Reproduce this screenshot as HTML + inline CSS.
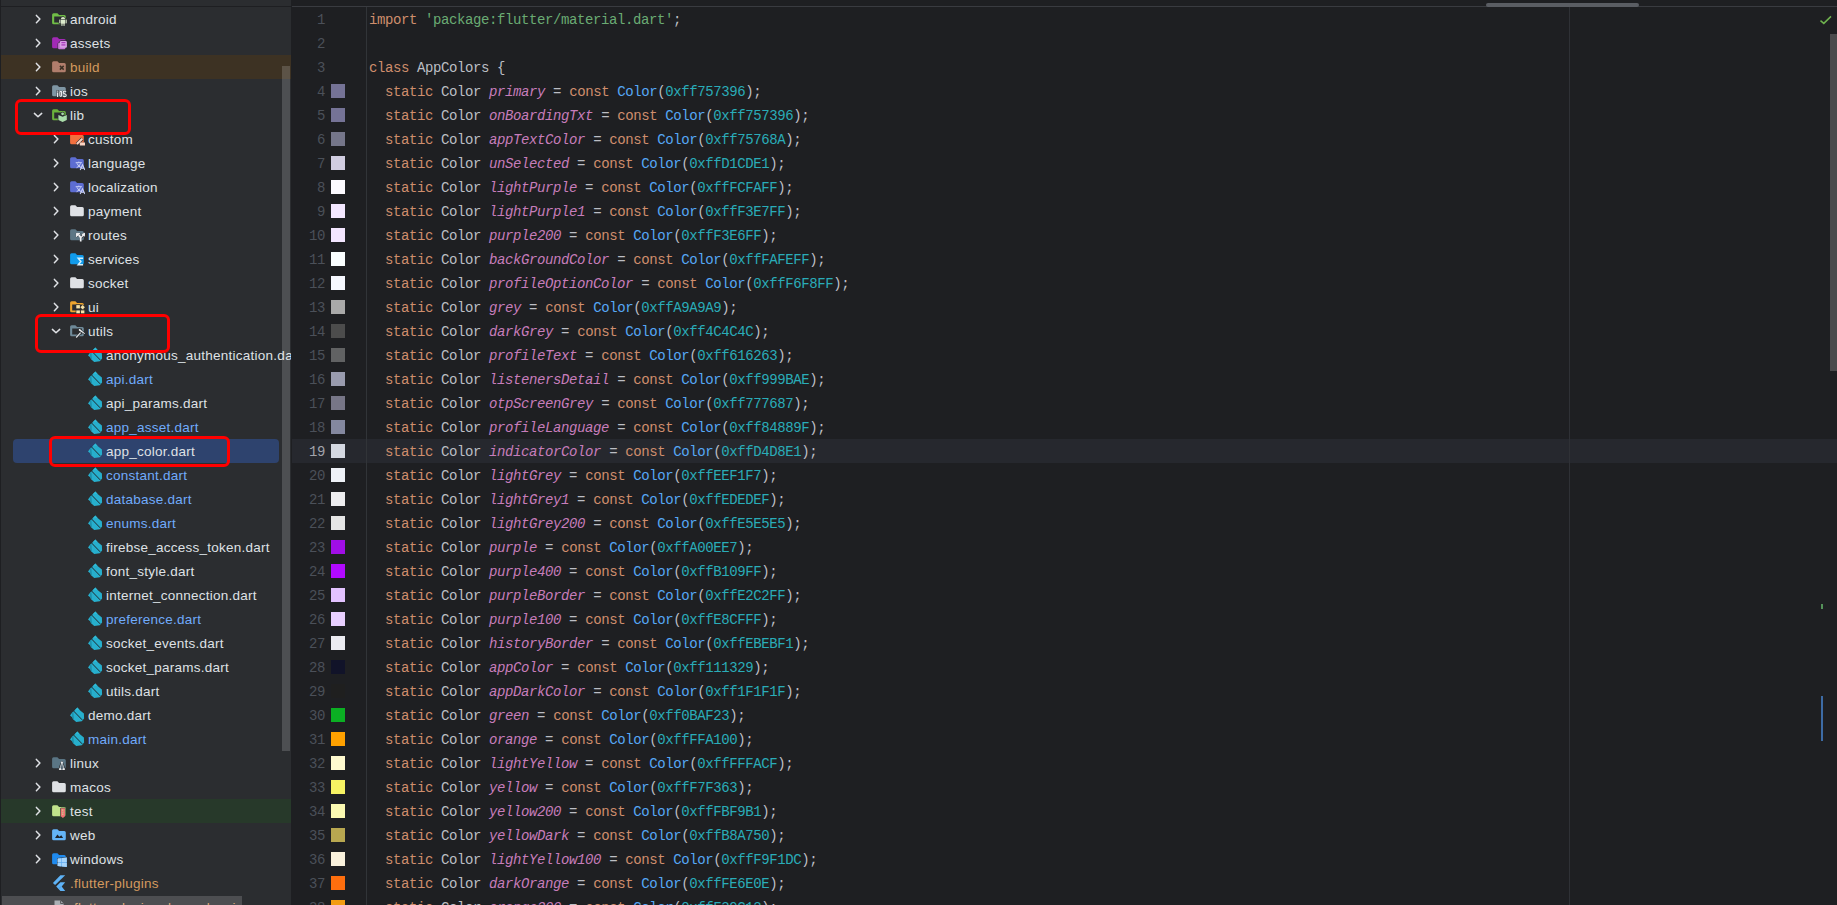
<!DOCTYPE html>
<html><head><meta charset="utf-8"><style>
html,body{margin:0;padding:0;width:1837px;height:905px;overflow:hidden;background:#1E1F22;}
body{position:relative;font-family:"Liberation Sans",sans-serif;}
#side{position:absolute;left:0;top:0;width:291px;height:905px;background:#2B2D30;overflow:hidden;}
#side .topline{position:absolute;left:0;top:6px;width:291px;height:1px;background:#1E1F22;}
.rowbg{position:absolute;left:0;width:291px;height:24px;}
.sel{position:absolute;left:13px;width:266px;height:24px;background:#2E436E;border-radius:4px;}
.ch{position:absolute;width:16px;height:16px;}
.ch svg{display:block}
.ic{position:absolute;}
.tl{position:absolute;height:24px;line-height:24px;font-size:13.5px;letter-spacing:0.25px;white-space:nowrap;}
.vsb{position:absolute;left:282px;top:66px;width:8px;height:685px;background:rgba(255,255,255,0.165);}
.hsb{position:absolute;left:2px;top:896px;width:240px;height:9px;background:rgba(255,255,255,0.16);}
.rbox{position:absolute;border:3px solid #FF0000;border-radius:6px;box-sizing:border-box;}
#ed{position:absolute;left:291px;top:0;width:1546px;height:905px;background:#1E1F22;overflow:hidden;}
.edline{position:absolute;left:1px;top:6px;width:1546px;height:1px;background:#393B40;}
.tsb{position:absolute;left:1195px;top:3px;width:153px;height:4px;background:#5A5D63;border-radius:2px;}
.caret{position:absolute;left:1px;width:1546px;height:24px;background:#26282E;}
.gsep{position:absolute;left:75px;top:7px;width:1px;height:898px;background:#313438;}
.rmargin{position:absolute;left:1278px;top:7px;width:1px;height:898px;background:#2F3136;}
.ln{position:absolute;left:0;width:34px;text-align:right;height:24px;line-height:24px;font-family:"Liberation Mono",monospace;font-size:14px;letter-spacing:-0.4px;color:#4B5059;}
.ln.cur{color:#A1A3AB;}
.sw{position:absolute;left:40px;width:14px;height:14px;}
.cl{position:absolute;left:78px;height:24px;line-height:24px;font-family:"Liberation Mono",monospace;font-size:14px;letter-spacing:-0.4px;white-space:pre;color:#BCBEC4;}
.esb{position:absolute;left:1539px;top:34px;width:7px;height:337px;background:#4A4A4C;}
.mk{position:absolute;left:1530px;width:2px;}
</style></head><body>
<div id="side">
<div class="topline"></div>
<div class="ch" style="left:30px;top:11px"><svg class="chev" width="16" height="16" viewBox="0 0 16 16"><path d="M6.4 4.4L9.9 8L6.4 11.7" fill="none" stroke="#DFE1E5" stroke-width="1.5" stroke-linecap="round" stroke-linejoin="round"/></svg></div>
<svg class="ic" style="left:51px;top:11px" width="16" height="16" viewBox="0 0 16 16"><path d="M1.1 3.8Q1.1 2.3 2.6 2.3H6.4L8.1 4.1H13.3Q14.8 4.1 14.8 5.6V11.8Q14.8 13.3 13.3 13.3H2.6Q1.1 13.3 1.1 11.8Z M3.2 5.6H12.9V11.4H3.2Z" fill="#71BE47" fill-rule="evenodd"/><g stroke="#2B2D30" stroke-width="1.3" stroke-linejoin="round" fill="#2B2D30"><path d="M9.9 8.1A2.1 2 0 0 1 14.1 8.1Z"/><rect x="9.9" y="8.6" width="4.2" height="4.2"/><rect x="8.3" y="8.6" width="1.1" height="3.7"/><rect x="14.6" y="8.6" width="1.1" height="3.7"/><rect x="10.4" y="12.6" width="1.1" height="2.3"/><rect x="12.5" y="12.6" width="1.1" height="2.3"/></g><g fill="#DCEACB"><path d="M9.9 8.1A2.1 2 0 0 1 14.1 8.1Z"/><rect x="9.9" y="8.6" width="4.2" height="4.2"/><rect x="8.3" y="8.6" width="1.1" height="3.7"/><rect x="14.6" y="8.6" width="1.1" height="3.7"/><rect x="10.4" y="12.6" width="1.1" height="2.3"/><rect x="12.5" y="12.6" width="1.1" height="2.3"/></g></svg>
<div class="tl" style="left:70px;top:8px;color:#DFE1E5">android</div>
<div class="ch" style="left:30px;top:35px"><svg class="chev" width="16" height="16" viewBox="0 0 16 16"><path d="M6.4 4.4L9.9 8L6.4 11.7" fill="none" stroke="#DFE1E5" stroke-width="1.5" stroke-linecap="round" stroke-linejoin="round"/></svg></div>
<svg class="ic" style="left:51px;top:35px" width="16" height="16" viewBox="0 0 16 16"><path d="M1.1 3.8Q1.1 2.3 2.6 2.3H6.4L8.1 4.1H13.3Q14.8 4.1 14.8 5.6V11.8Q14.8 13.3 13.3 13.3H2.6Q1.1 13.3 1.1 11.8Z" fill="#A12AB5"/><g stroke="#2B2D30" stroke-width="1.0" stroke-linejoin="round" fill="#2B2D30"><rect x="7.1" y="7.7" width="7.3" height="6.6" rx="1.2"/><rect x="8.8" y="5.9" width="7.1" height="6.9" rx="1.2"/></g><rect x="7.1" y="7.7" width="7.3" height="6.6" rx="1.2" fill="#C679D5"/><rect x="8.8" y="5.9" width="7.1" height="6.9" rx="1.2" fill="#D99FE4"/><rect x="10.4" y="7.1" width="4" height="1.1" fill="#A433B7"/><rect x="10.4" y="9.1" width="4" height="1.6" fill="#B24FC3"/></svg>
<div class="tl" style="left:70px;top:32px;color:#DFE1E5">assets</div>
<div class="rowbg" style="top:55px;background:#3D3223"></div>
<div class="ch" style="left:30px;top:59px"><svg class="chev" width="16" height="16" viewBox="0 0 16 16"><path d="M6.4 4.4L9.9 8L6.4 11.7" fill="none" stroke="#DFE1E5" stroke-width="1.5" stroke-linecap="round" stroke-linejoin="round"/></svg></div>
<svg class="ic" style="left:51px;top:59px" width="16" height="16" viewBox="0 0 16 16"><path d="M1.1 3.8Q1.1 2.3 2.6 2.3H6.4L8.1 4.1H13.3Q14.8 4.1 14.8 5.6V11.8Q14.8 13.3 13.3 13.3H2.6Q1.1 13.3 1.1 11.8Z" fill="#B17E6C"/><path d="M8.9 6.9L12.7 10.6M12.7 6.9L8.9 10.6" stroke="#3A3024" stroke-width="1.5"/></svg>
<div class="tl" style="left:70px;top:56px;color:#D49A5F">build</div>
<div class="ch" style="left:30px;top:83px"><svg class="chev" width="16" height="16" viewBox="0 0 16 16"><path d="M6.4 4.4L9.9 8L6.4 11.7" fill="none" stroke="#DFE1E5" stroke-width="1.5" stroke-linecap="round" stroke-linejoin="round"/></svg></div>
<svg class="ic" style="left:51px;top:83px" width="16" height="16" viewBox="0 0 16 16"><path d="M1.1 3.8Q1.1 2.3 2.6 2.3H6.4L8.1 4.1H13.3Q14.8 4.1 14.8 5.6V11.8Q14.8 13.3 13.3 13.3H2.6Q1.1 13.3 1.1 11.8Z" fill="#7F96A4"/><g fill="#2B2D30" stroke="#2B2D30" stroke-width="0.7"><rect x="6" y="7.6" width="1.2" height="1.1"/><rect x="6" y="9.4" width="1.2" height="4.6"/></g><g fill="none" stroke="#2B2D30" stroke-width="1.9"><rect x="8.9" y="8.4" width="1.7" height="5" rx=".85"/><path d="M15.1 8.7Q14.6 8.1 13.6 8.1Q12.2 8.1 12.2 9.3Q12.2 10.5 13.7 10.9Q15.2 11.3 15.2 12.4Q15.2 13.6 13.6 13.6Q12.5 13.6 11.9 12.9"/></g><g fill="#E6EAED"><rect x="6" y="7.6" width="1.2" height="1.1"/><rect x="6" y="9.4" width="1.2" height="4.6"/></g><g fill="none" stroke="#E6EAED" stroke-width="1.2"><rect x="8.9" y="8.4" width="1.7" height="5" rx=".85"/><path d="M15.1 8.7Q14.6 8.1 13.6 8.1Q12.2 8.1 12.2 9.3Q12.2 10.5 13.7 10.9Q15.2 11.3 15.2 12.4Q15.2 13.6 13.6 13.6Q12.5 13.6 11.9 12.9"/></g></svg>
<div class="tl" style="left:70px;top:80px;color:#DFE1E5">ios</div>
<div class="ch" style="left:30px;top:107px"><svg class="chev" width="16" height="16" viewBox="0 0 16 16"><path d="M4.4 6.4L8 9.8L11.7 6.4" fill="none" stroke="#DFE1E5" stroke-width="1.5" stroke-linecap="round" stroke-linejoin="round"/></svg></div>
<svg class="ic" style="left:51px;top:107px" width="16" height="16" viewBox="0 0 16 16"><path d="M1.1 3.8Q1.1 2.3 2.6 2.3H6.4L8.1 4.1H13.3Q14.8 4.1 14.8 5.6V11.8Q14.8 13.3 13.3 13.3H2.6Q1.1 13.3 1.1 11.8Z M3.2 5.6H12.9V11.4H3.2Z" fill="#6BB33C" fill-rule="evenodd"/><g stroke="#2B2D30" stroke-width="1.3" stroke-linejoin="round" fill="#2B2D30"><circle cx="11.6" cy="6.8" r="1.4"/><path d="M7.4 8.1L11.6 9.7L15.8 8.1V13.1L11.6 14.9L7.4 13.1Z"/></g><g fill="#A9DCA9"><circle cx="11.6" cy="6.8" r="1.4"/><path d="M7.4 8.1L11.6 9.7L15.8 8.1V13.1L11.6 14.9L7.4 13.1Z"/></g></svg>
<div class="tl" style="left:70px;top:104px;color:#DFE1E5">lib</div>
<div class="ch" style="left:48px;top:131px"><svg class="chev" width="16" height="16" viewBox="0 0 16 16"><path d="M6.4 4.4L9.9 8L6.4 11.7" fill="none" stroke="#DFE1E5" stroke-width="1.5" stroke-linecap="round" stroke-linejoin="round"/></svg></div>
<svg class="ic" style="left:69px;top:131px" width="16" height="16" viewBox="0 0 16 16"><path d="M1.1 3.8Q1.1 2.3 2.6 2.3H6.4L8.1 4.1H13.3Q14.8 4.1 14.8 5.6V11.8Q14.8 13.3 13.3 13.3H2.6Q1.1 13.3 1.1 11.8Z" fill="#F2703F"/><g stroke="#2B2D30" fill="#2B2D30"><path d="M7.9 13.1L13.3 7.8" stroke-width="3.3" fill="none"/><rect x="11" y="11.6" width="5.4" height="2.8" stroke-width="0"/></g><g stroke="#F9D3C3" fill="#F9D3C3"><path d="M7.9 13.1L13.3 7.8" stroke-width="2.1" fill="none"/><rect x="11.4" y="12" width="4.6" height="2"/></g></svg>
<div class="tl" style="left:88px;top:128px;color:#DFE1E5">custom</div>
<div class="ch" style="left:48px;top:155px"><svg class="chev" width="16" height="16" viewBox="0 0 16 16"><path d="M6.4 4.4L9.9 8L6.4 11.7" fill="none" stroke="#DFE1E5" stroke-width="1.5" stroke-linecap="round" stroke-linejoin="round"/></svg></div>
<svg class="ic" style="left:69px;top:155px" width="16" height="16" viewBox="0 0 16 16"><path d="M1.1 3.8Q1.1 2.3 2.6 2.3H6.4L8.1 4.1H13.3Q14.8 4.1 14.8 5.6V11.8Q14.8 13.3 13.3 13.3H2.6Q1.1 13.3 1.1 11.8Z" fill="#5D6DD2"/><g stroke="#CBD2F5" fill="none"><path d="M6.7 7.7H12.9M9.8 6.6V7.7M8 8.4Q9.4 11.6 12.2 12.6M11.6 8.4Q10.3 11.7 7.6 12.7" fill="none" stroke-width="1"/><path d="M11.2 14.9L13.5 9.8L15.8 14.9M12.1 13.3H14.9" fill="none" stroke-width="1.1"/></g></svg>
<div class="tl" style="left:88px;top:152px;color:#DFE1E5">language</div>
<div class="ch" style="left:48px;top:179px"><svg class="chev" width="16" height="16" viewBox="0 0 16 16"><path d="M6.4 4.4L9.9 8L6.4 11.7" fill="none" stroke="#DFE1E5" stroke-width="1.5" stroke-linecap="round" stroke-linejoin="round"/></svg></div>
<svg class="ic" style="left:69px;top:179px" width="16" height="16" viewBox="0 0 16 16"><path d="M1.1 3.8Q1.1 2.3 2.6 2.3H6.4L8.1 4.1H13.3Q14.8 4.1 14.8 5.6V11.8Q14.8 13.3 13.3 13.3H2.6Q1.1 13.3 1.1 11.8Z" fill="#5D6DD2"/><g stroke="#CBD2F5" fill="none"><path d="M6.7 7.7H12.9M9.8 6.6V7.7M8 8.4Q9.4 11.6 12.2 12.6M11.6 8.4Q10.3 11.7 7.6 12.7" fill="none" stroke-width="1"/><path d="M11.2 14.9L13.5 9.8L15.8 14.9M12.1 13.3H14.9" fill="none" stroke-width="1.1"/></g></svg>
<div class="tl" style="left:88px;top:176px;color:#DFE1E5">localization</div>
<div class="ch" style="left:48px;top:203px"><svg class="chev" width="16" height="16" viewBox="0 0 16 16"><path d="M6.4 4.4L9.9 8L6.4 11.7" fill="none" stroke="#DFE1E5" stroke-width="1.5" stroke-linecap="round" stroke-linejoin="round"/></svg></div>
<svg class="ic" style="left:69px;top:203px" width="16" height="16" viewBox="0 0 16 16"><path d="M1.1 3.8Q1.1 2.3 2.6 2.3H6.4L8.1 4.1H13.3Q14.8 4.1 14.8 5.6V11.8Q14.8 13.3 13.3 13.3H2.6Q1.1 13.3 1.1 11.8Z" fill="#DFE1E5"/></svg>
<div class="tl" style="left:88px;top:200px;color:#DFE1E5">payment</div>
<div class="ch" style="left:48px;top:227px"><svg class="chev" width="16" height="16" viewBox="0 0 16 16"><path d="M6.4 4.4L9.9 8L6.4 11.7" fill="none" stroke="#DFE1E5" stroke-width="1.5" stroke-linecap="round" stroke-linejoin="round"/></svg></div>
<svg class="ic" style="left:69px;top:227px" width="16" height="16" viewBox="0 0 16 16"><path d="M1.1 3.8Q1.1 2.3 2.6 2.3H6.4L8.1 4.1H13.3Q14.8 4.1 14.8 5.6V11.8Q14.8 13.3 13.3 13.3H2.6Q1.1 13.3 1.1 11.8Z" fill="#5D7785"/><g stroke="#2B2D30" stroke-width="1.2" stroke-linejoin="round" fill="#2B2D30"><path d="M11.7 14.4V11.2Q11.7 9.8 9.6 8" fill="none" stroke-width="1.7"/><path d="M7.5 6.3L10.8 6.5L7.4 9.7Z"/><path d="M12 10.6L14 8.3" fill="none" stroke-width="2.8"/><path d="M16 6.2L13.1 7.3L15.1 9.3Z"/></g><g fill="#F0F2F4" stroke="#F0F2F4" ><path d="M11.7 14.4V11.2Q11.7 9.8 9.6 8" fill="none" stroke-width="1.7"/><path d="M7.5 6.3L10.8 6.5L7.4 9.7Z"/><path d="M12 10.6L14 8.3" fill="none" stroke-width="1.4"/><path d="M16 6.2L13.1 7.3L15.1 9.3Z"/></g></svg>
<div class="tl" style="left:88px;top:224px;color:#DFE1E5">routes</div>
<div class="ch" style="left:48px;top:251px"><svg class="chev" width="16" height="16" viewBox="0 0 16 16"><path d="M6.4 4.4L9.9 8L6.4 11.7" fill="none" stroke="#DFE1E5" stroke-width="1.5" stroke-linecap="round" stroke-linejoin="round"/></svg></div>
<svg class="ic" style="left:69px;top:251px" width="16" height="16" viewBox="0 0 16 16"><path d="M1.1 3.8Q1.1 2.3 2.6 2.3H6.4L8.1 4.1H13.3Q14.8 4.1 14.8 5.6V11.8Q14.8 13.3 13.3 13.3H2.6Q1.1 13.3 1.1 11.8Z" fill="#119BEB"/><g stroke="#D4EFFC" fill="none"><path d="M14.1 7.2H9.2L11.9 10.5L9.2 13.8H14.1" fill="none" stroke-width="1.5"/></g></svg>
<div class="tl" style="left:88px;top:248px;color:#DFE1E5">services</div>
<div class="ch" style="left:48px;top:275px"><svg class="chev" width="16" height="16" viewBox="0 0 16 16"><path d="M6.4 4.4L9.9 8L6.4 11.7" fill="none" stroke="#DFE1E5" stroke-width="1.5" stroke-linecap="round" stroke-linejoin="round"/></svg></div>
<svg class="ic" style="left:69px;top:275px" width="16" height="16" viewBox="0 0 16 16"><path d="M1.1 3.8Q1.1 2.3 2.6 2.3H6.4L8.1 4.1H13.3Q14.8 4.1 14.8 5.6V11.8Q14.8 13.3 13.3 13.3H2.6Q1.1 13.3 1.1 11.8Z" fill="#DFE1E5"/></svg>
<div class="tl" style="left:88px;top:272px;color:#DFE1E5">socket</div>
<div class="ch" style="left:48px;top:299px"><svg class="chev" width="16" height="16" viewBox="0 0 16 16"><path d="M6.4 4.4L9.9 8L6.4 11.7" fill="none" stroke="#DFE1E5" stroke-width="1.5" stroke-linecap="round" stroke-linejoin="round"/></svg></div>
<svg class="ic" style="left:69px;top:299px" width="16" height="16" viewBox="0 0 16 16"><path d="M1.1 3.8Q1.1 2.3 2.6 2.3H6.4L8.1 4.1H13.3Q14.8 4.1 14.8 5.6V11.8Q14.8 13.3 13.3 13.3H2.6Q1.1 13.3 1.1 11.8Z M3.2 5.6H12.9V11.4H3.2Z" fill="#EFA52D" fill-rule="evenodd"/><g stroke="#2B2D30" stroke-width="1.2" stroke-linejoin="round" fill="#2B2D30"><rect x="7.3" y="6.1" width="3.6" height="3.3"/><path d="M13.6 6.1L15.9 8.3L13.6 10.5L11.4 8.3Z"/><rect x="7.3" y="11.4" width="3.6" height="2.9"/><rect x="12" y="11.4" width="3.4" height="2.9"/></g><g fill="#F6E2A6"><rect x="7.3" y="6.1" width="3.6" height="3.3"/><path d="M13.6 6.1L15.9 8.3L13.6 10.5L11.4 8.3Z"/><rect x="7.3" y="11.4" width="3.6" height="2.9"/><rect x="12" y="11.4" width="3.4" height="2.9"/></g></svg>
<div class="tl" style="left:88px;top:296px;color:#DFE1E5">ui</div>
<div class="ch" style="left:48px;top:323px"><svg class="chev" width="16" height="16" viewBox="0 0 16 16"><path d="M4.4 6.4L8 9.8L11.7 6.4" fill="none" stroke="#DFE1E5" stroke-width="1.5" stroke-linecap="round" stroke-linejoin="round"/></svg></div>
<svg class="ic" style="left:69px;top:323px" width="16" height="16" viewBox="0 0 16 16"><path d="M1.1 3.8Q1.1 2.3 2.6 2.3H6.4L8.1 4.1H13.3Q14.8 4.1 14.8 5.6V11.8Q14.8 13.3 13.3 13.3H2.6Q1.1 13.3 1.1 11.8Z M3.2 5.6H12.9V11.4H3.2Z" fill="#6F8A99" fill-rule="evenodd"/><g stroke="#2B2D30" fill="#2B2D30" stroke-linejoin="round"><path d="M7.2 14.5L11.6 9.7" fill="none" stroke-width="2.4"/><path d="M9.9 5.8L11.2 6.2L16 10.6L15.6 11L9.9 7.4Z" stroke-width="1.2"/></g><path d="M7.2 14.5L11.6 9.7" fill="none" stroke="#E4E7EA" stroke-width="1.2"/><path d="M9.9 5.8L11.2 6.2L16 10.6L15.6 11L9.9 7.4Z" fill="#EEF0F2"/></svg>
<div class="tl" style="left:88px;top:320px;color:#DFE1E5">utils</div>
<svg class="ic" style="left:87px;top:347px" width="16" height="16" viewBox="0 0 16 16"><path d="M8.4 0.6L10.6 2.9L14.9 6.6L15.1 11.6L12.8 14.3L7.2 15.1L4.1 12.2L3.2 10.3L1 8.5L3.2 5.4L6 2.9Z" fill="#27AFCD"/><path d="M3.2 5.4L4.3 4.4L4.9 12.9L4.1 12.2L3.2 10.3Z" fill="#1C8CA6"/><path d="M6 2.9L8.4 0.6L10.6 2.9Z" fill="#2FBAD6"/><path d="M4.1 3.5L13.2 12.9" stroke="#1F2A30" stroke-width="1"/></svg>
<div class="tl" style="left:106px;top:344px;color:#DFE1E5">anonymous_authentication.dart</div>
<svg class="ic" style="left:87px;top:371px" width="16" height="16" viewBox="0 0 16 16"><path d="M8.4 0.6L10.6 2.9L14.9 6.6L15.1 11.6L12.8 14.3L7.2 15.1L4.1 12.2L3.2 10.3L1 8.5L3.2 5.4L6 2.9Z" fill="#27AFCD"/><path d="M3.2 5.4L4.3 4.4L4.9 12.9L4.1 12.2L3.2 10.3Z" fill="#1C8CA6"/><path d="M6 2.9L8.4 0.6L10.6 2.9Z" fill="#2FBAD6"/><path d="M4.1 3.5L13.2 12.9" stroke="#1F2A30" stroke-width="1"/></svg>
<div class="tl" style="left:106px;top:368px;color:#70ABFC">api.dart</div>
<svg class="ic" style="left:87px;top:395px" width="16" height="16" viewBox="0 0 16 16"><path d="M8.4 0.6L10.6 2.9L14.9 6.6L15.1 11.6L12.8 14.3L7.2 15.1L4.1 12.2L3.2 10.3L1 8.5L3.2 5.4L6 2.9Z" fill="#27AFCD"/><path d="M3.2 5.4L4.3 4.4L4.9 12.9L4.1 12.2L3.2 10.3Z" fill="#1C8CA6"/><path d="M6 2.9L8.4 0.6L10.6 2.9Z" fill="#2FBAD6"/><path d="M4.1 3.5L13.2 12.9" stroke="#1F2A30" stroke-width="1"/></svg>
<div class="tl" style="left:106px;top:392px;color:#DFE1E5">api_params.dart</div>
<svg class="ic" style="left:87px;top:419px" width="16" height="16" viewBox="0 0 16 16"><path d="M8.4 0.6L10.6 2.9L14.9 6.6L15.1 11.6L12.8 14.3L7.2 15.1L4.1 12.2L3.2 10.3L1 8.5L3.2 5.4L6 2.9Z" fill="#27AFCD"/><path d="M3.2 5.4L4.3 4.4L4.9 12.9L4.1 12.2L3.2 10.3Z" fill="#1C8CA6"/><path d="M6 2.9L8.4 0.6L10.6 2.9Z" fill="#2FBAD6"/><path d="M4.1 3.5L13.2 12.9" stroke="#1F2A30" stroke-width="1"/></svg>
<div class="tl" style="left:106px;top:416px;color:#70ABFC">app_asset.dart</div>
<div class="sel" style="top:439px"></div>
<svg class="ic" style="left:87px;top:443px" width="16" height="16" viewBox="0 0 16 16"><path d="M8.4 0.6L10.6 2.9L14.9 6.6L15.1 11.6L12.8 14.3L7.2 15.1L4.1 12.2L3.2 10.3L1 8.5L3.2 5.4L6 2.9Z" fill="#27AFCD"/><path d="M3.2 5.4L4.3 4.4L4.9 12.9L4.1 12.2L3.2 10.3Z" fill="#1C8CA6"/><path d="M6 2.9L8.4 0.6L10.6 2.9Z" fill="#2FBAD6"/><path d="M4.1 3.5L13.2 12.9" stroke="#1F2A30" stroke-width="1"/></svg>
<div class="tl" style="left:106px;top:440px;color:#DFE1E5">app_color.dart</div>
<svg class="ic" style="left:87px;top:467px" width="16" height="16" viewBox="0 0 16 16"><path d="M8.4 0.6L10.6 2.9L14.9 6.6L15.1 11.6L12.8 14.3L7.2 15.1L4.1 12.2L3.2 10.3L1 8.5L3.2 5.4L6 2.9Z" fill="#27AFCD"/><path d="M3.2 5.4L4.3 4.4L4.9 12.9L4.1 12.2L3.2 10.3Z" fill="#1C8CA6"/><path d="M6 2.9L8.4 0.6L10.6 2.9Z" fill="#2FBAD6"/><path d="M4.1 3.5L13.2 12.9" stroke="#1F2A30" stroke-width="1"/></svg>
<div class="tl" style="left:106px;top:464px;color:#70ABFC">constant.dart</div>
<svg class="ic" style="left:87px;top:491px" width="16" height="16" viewBox="0 0 16 16"><path d="M8.4 0.6L10.6 2.9L14.9 6.6L15.1 11.6L12.8 14.3L7.2 15.1L4.1 12.2L3.2 10.3L1 8.5L3.2 5.4L6 2.9Z" fill="#27AFCD"/><path d="M3.2 5.4L4.3 4.4L4.9 12.9L4.1 12.2L3.2 10.3Z" fill="#1C8CA6"/><path d="M6 2.9L8.4 0.6L10.6 2.9Z" fill="#2FBAD6"/><path d="M4.1 3.5L13.2 12.9" stroke="#1F2A30" stroke-width="1"/></svg>
<div class="tl" style="left:106px;top:488px;color:#70ABFC">database.dart</div>
<svg class="ic" style="left:87px;top:515px" width="16" height="16" viewBox="0 0 16 16"><path d="M8.4 0.6L10.6 2.9L14.9 6.6L15.1 11.6L12.8 14.3L7.2 15.1L4.1 12.2L3.2 10.3L1 8.5L3.2 5.4L6 2.9Z" fill="#27AFCD"/><path d="M3.2 5.4L4.3 4.4L4.9 12.9L4.1 12.2L3.2 10.3Z" fill="#1C8CA6"/><path d="M6 2.9L8.4 0.6L10.6 2.9Z" fill="#2FBAD6"/><path d="M4.1 3.5L13.2 12.9" stroke="#1F2A30" stroke-width="1"/></svg>
<div class="tl" style="left:106px;top:512px;color:#70ABFC">enums.dart</div>
<svg class="ic" style="left:87px;top:539px" width="16" height="16" viewBox="0 0 16 16"><path d="M8.4 0.6L10.6 2.9L14.9 6.6L15.1 11.6L12.8 14.3L7.2 15.1L4.1 12.2L3.2 10.3L1 8.5L3.2 5.4L6 2.9Z" fill="#27AFCD"/><path d="M3.2 5.4L4.3 4.4L4.9 12.9L4.1 12.2L3.2 10.3Z" fill="#1C8CA6"/><path d="M6 2.9L8.4 0.6L10.6 2.9Z" fill="#2FBAD6"/><path d="M4.1 3.5L13.2 12.9" stroke="#1F2A30" stroke-width="1"/></svg>
<div class="tl" style="left:106px;top:536px;color:#DFE1E5">firebse_access_token.dart</div>
<svg class="ic" style="left:87px;top:563px" width="16" height="16" viewBox="0 0 16 16"><path d="M8.4 0.6L10.6 2.9L14.9 6.6L15.1 11.6L12.8 14.3L7.2 15.1L4.1 12.2L3.2 10.3L1 8.5L3.2 5.4L6 2.9Z" fill="#27AFCD"/><path d="M3.2 5.4L4.3 4.4L4.9 12.9L4.1 12.2L3.2 10.3Z" fill="#1C8CA6"/><path d="M6 2.9L8.4 0.6L10.6 2.9Z" fill="#2FBAD6"/><path d="M4.1 3.5L13.2 12.9" stroke="#1F2A30" stroke-width="1"/></svg>
<div class="tl" style="left:106px;top:560px;color:#DFE1E5">font_style.dart</div>
<svg class="ic" style="left:87px;top:587px" width="16" height="16" viewBox="0 0 16 16"><path d="M8.4 0.6L10.6 2.9L14.9 6.6L15.1 11.6L12.8 14.3L7.2 15.1L4.1 12.2L3.2 10.3L1 8.5L3.2 5.4L6 2.9Z" fill="#27AFCD"/><path d="M3.2 5.4L4.3 4.4L4.9 12.9L4.1 12.2L3.2 10.3Z" fill="#1C8CA6"/><path d="M6 2.9L8.4 0.6L10.6 2.9Z" fill="#2FBAD6"/><path d="M4.1 3.5L13.2 12.9" stroke="#1F2A30" stroke-width="1"/></svg>
<div class="tl" style="left:106px;top:584px;color:#DFE1E5">internet_connection.dart</div>
<svg class="ic" style="left:87px;top:611px" width="16" height="16" viewBox="0 0 16 16"><path d="M8.4 0.6L10.6 2.9L14.9 6.6L15.1 11.6L12.8 14.3L7.2 15.1L4.1 12.2L3.2 10.3L1 8.5L3.2 5.4L6 2.9Z" fill="#27AFCD"/><path d="M3.2 5.4L4.3 4.4L4.9 12.9L4.1 12.2L3.2 10.3Z" fill="#1C8CA6"/><path d="M6 2.9L8.4 0.6L10.6 2.9Z" fill="#2FBAD6"/><path d="M4.1 3.5L13.2 12.9" stroke="#1F2A30" stroke-width="1"/></svg>
<div class="tl" style="left:106px;top:608px;color:#70ABFC">preference.dart</div>
<svg class="ic" style="left:87px;top:635px" width="16" height="16" viewBox="0 0 16 16"><path d="M8.4 0.6L10.6 2.9L14.9 6.6L15.1 11.6L12.8 14.3L7.2 15.1L4.1 12.2L3.2 10.3L1 8.5L3.2 5.4L6 2.9Z" fill="#27AFCD"/><path d="M3.2 5.4L4.3 4.4L4.9 12.9L4.1 12.2L3.2 10.3Z" fill="#1C8CA6"/><path d="M6 2.9L8.4 0.6L10.6 2.9Z" fill="#2FBAD6"/><path d="M4.1 3.5L13.2 12.9" stroke="#1F2A30" stroke-width="1"/></svg>
<div class="tl" style="left:106px;top:632px;color:#DFE1E5">socket_events.dart</div>
<svg class="ic" style="left:87px;top:659px" width="16" height="16" viewBox="0 0 16 16"><path d="M8.4 0.6L10.6 2.9L14.9 6.6L15.1 11.6L12.8 14.3L7.2 15.1L4.1 12.2L3.2 10.3L1 8.5L3.2 5.4L6 2.9Z" fill="#27AFCD"/><path d="M3.2 5.4L4.3 4.4L4.9 12.9L4.1 12.2L3.2 10.3Z" fill="#1C8CA6"/><path d="M6 2.9L8.4 0.6L10.6 2.9Z" fill="#2FBAD6"/><path d="M4.1 3.5L13.2 12.9" stroke="#1F2A30" stroke-width="1"/></svg>
<div class="tl" style="left:106px;top:656px;color:#DFE1E5">socket_params.dart</div>
<svg class="ic" style="left:87px;top:683px" width="16" height="16" viewBox="0 0 16 16"><path d="M8.4 0.6L10.6 2.9L14.9 6.6L15.1 11.6L12.8 14.3L7.2 15.1L4.1 12.2L3.2 10.3L1 8.5L3.2 5.4L6 2.9Z" fill="#27AFCD"/><path d="M3.2 5.4L4.3 4.4L4.9 12.9L4.1 12.2L3.2 10.3Z" fill="#1C8CA6"/><path d="M6 2.9L8.4 0.6L10.6 2.9Z" fill="#2FBAD6"/><path d="M4.1 3.5L13.2 12.9" stroke="#1F2A30" stroke-width="1"/></svg>
<div class="tl" style="left:106px;top:680px;color:#DFE1E5">utils.dart</div>
<svg class="ic" style="left:69px;top:707px" width="16" height="16" viewBox="0 0 16 16"><path d="M8.4 0.6L10.6 2.9L14.9 6.6L15.1 11.6L12.8 14.3L7.2 15.1L4.1 12.2L3.2 10.3L1 8.5L3.2 5.4L6 2.9Z" fill="#27AFCD"/><path d="M3.2 5.4L4.3 4.4L4.9 12.9L4.1 12.2L3.2 10.3Z" fill="#1C8CA6"/><path d="M6 2.9L8.4 0.6L10.6 2.9Z" fill="#2FBAD6"/><path d="M4.1 3.5L13.2 12.9" stroke="#1F2A30" stroke-width="1"/></svg>
<div class="tl" style="left:88px;top:704px;color:#DFE1E5">demo.dart</div>
<svg class="ic" style="left:69px;top:731px" width="16" height="16" viewBox="0 0 16 16"><path d="M8.4 0.6L10.6 2.9L14.9 6.6L15.1 11.6L12.8 14.3L7.2 15.1L4.1 12.2L3.2 10.3L1 8.5L3.2 5.4L6 2.9Z" fill="#27AFCD"/><path d="M3.2 5.4L4.3 4.4L4.9 12.9L4.1 12.2L3.2 10.3Z" fill="#1C8CA6"/><path d="M6 2.9L8.4 0.6L10.6 2.9Z" fill="#2FBAD6"/><path d="M4.1 3.5L13.2 12.9" stroke="#1F2A30" stroke-width="1"/></svg>
<div class="tl" style="left:88px;top:728px;color:#70ABFC">main.dart</div>
<div class="ch" style="left:30px;top:755px"><svg class="chev" width="16" height="16" viewBox="0 0 16 16"><path d="M6.4 4.4L9.9 8L6.4 11.7" fill="none" stroke="#DFE1E5" stroke-width="1.5" stroke-linecap="round" stroke-linejoin="round"/></svg></div>
<svg class="ic" style="left:51px;top:755px" width="16" height="16" viewBox="0 0 16 16"><path d="M1.1 3.8Q1.1 2.3 2.6 2.3H6.4L8.1 4.1H13.3Q14.8 4.1 14.8 5.6V11.8Q14.8 13.3 13.3 13.3H2.6Q1.1 13.3 1.1 11.8Z" fill="#5A7584"/><g stroke="#2B2D30" stroke-width="1.2" stroke-linejoin="round" fill="#2B2D30"><path d="M8.3 14.8Q8.6 10.8 10.9 6.6Q13.3 10.8 13.6 14.8Z"/></g><path d="M8.3 14.8Q8.6 10.8 10.9 6.6Q13.3 10.8 13.6 14.8Z" fill="#9FAAB1"/><path d="M10 13.9Q10.3 11 10.9 9.4Q11.6 11 11.9 13.9Z" fill="#3E5260"/><circle cx="10.9" cy="7.7" r="1.1" fill="#E8EAEC"/><ellipse cx="9.1" cy="14.1" rx="1.3" ry="0.9" fill="#F2F3F4"/><ellipse cx="12.8" cy="14.1" rx="1.3" ry="0.9" fill="#F2F3F4"/></svg>
<div class="tl" style="left:70px;top:752px;color:#DFE1E5">linux</div>
<div class="ch" style="left:30px;top:779px"><svg class="chev" width="16" height="16" viewBox="0 0 16 16"><path d="M6.4 4.4L9.9 8L6.4 11.7" fill="none" stroke="#DFE1E5" stroke-width="1.5" stroke-linecap="round" stroke-linejoin="round"/></svg></div>
<svg class="ic" style="left:51px;top:779px" width="16" height="16" viewBox="0 0 16 16"><path d="M1.1 3.8Q1.1 2.3 2.6 2.3H6.4L8.1 4.1H13.3Q14.8 4.1 14.8 5.6V11.8Q14.8 13.3 13.3 13.3H2.6Q1.1 13.3 1.1 11.8Z" fill="#DFE1E5"/></svg>
<div class="tl" style="left:70px;top:776px;color:#DFE1E5">macos</div>
<div class="rowbg" style="top:799px;background:#27392A"></div>
<div class="ch" style="left:30px;top:803px"><svg class="chev" width="16" height="16" viewBox="0 0 16 16"><path d="M6.4 4.4L9.9 8L6.4 11.7" fill="none" stroke="#DFE1E5" stroke-width="1.5" stroke-linecap="round" stroke-linejoin="round"/></svg></div>
<svg class="ic" style="left:51px;top:803px" width="16" height="16" viewBox="0 0 16 16"><path d="M1.1 3.8Q1.1 2.3 2.6 2.3H6.4L8.1 4.1H13.3Q14.8 4.1 14.8 5.6V11.8Q14.8 13.3 13.3 13.3H2.6Q1.1 13.3 1.1 11.8Z" fill="#C0E38B"/><g stroke="#27392A" stroke-width="1.0" stroke-linejoin="round" fill="#27392A"><path d="M9.8 5.2H14V13.3L11.9 15L9.8 13.3Z"/></g><g fill="#EE7474"><path d="M9.8 5.2H14V13.3L11.9 15L9.8 13.3Z"/></g><circle cx="11.7" cy="7.1" r=".8" fill="#D9C98A"/><rect x="10.9" y="8.8" width="1.8" height=".9" fill="#C0C98A"/><circle cx="11.7" cy="11.3" r=".8" fill="#D9C98A"/></svg>
<div class="tl" style="left:70px;top:800px;color:#DFE1E5">test</div>
<div class="ch" style="left:30px;top:827px"><svg class="chev" width="16" height="16" viewBox="0 0 16 16"><path d="M6.4 4.4L9.9 8L6.4 11.7" fill="none" stroke="#DFE1E5" stroke-width="1.5" stroke-linecap="round" stroke-linejoin="round"/></svg></div>
<svg class="ic" style="left:51px;top:827px" width="16" height="16" viewBox="0 0 16 16"><path d="M1.1 3.8Q1.1 2.3 2.6 2.3H6.4L8.1 4.1H13.3Q14.8 4.1 14.8 5.6V11.8Q14.8 13.3 13.3 13.3H2.6Q1.1 13.3 1.1 11.8Z" fill="#64B4F6"/><path d="M4 10.9L6.4 7.4L8.4 9.8L10.3 8.3L12.1 10.9Z" fill="#1F2328"/></svg>
<div class="tl" style="left:70px;top:824px;color:#DFE1E5">web</div>
<div class="ch" style="left:30px;top:851px"><svg class="chev" width="16" height="16" viewBox="0 0 16 16"><path d="M6.4 4.4L9.9 8L6.4 11.7" fill="none" stroke="#DFE1E5" stroke-width="1.5" stroke-linecap="round" stroke-linejoin="round"/></svg></div>
<svg class="ic" style="left:51px;top:851px" width="16" height="16" viewBox="0 0 16 16"><path d="M1.1 3.8Q1.1 2.3 2.6 2.3H6.4L8.1 4.1H13.3Q14.8 4.1 14.8 5.6V11.8Q14.8 13.3 13.3 13.3H2.6Q1.1 13.3 1.1 11.8Z" fill="#1F8AEE"/><path d="M6.6 7.6L15.8 6.6V16L6.6 15.1Z" fill="#2B2D30" stroke="#2B2D30" stroke-width="1.1" stroke-linejoin="round"/><path d="M6.6 7.6L15.8 6.6V16L6.6 15.1Z" fill="#5FAAF0"/><g fill="#A6D4FB"><path d="M6.6 7.6L10.3 7.2V11.1H6.6Z"/><path d="M10.9 7.1L15.8 6.6V11.1H10.9Z"/><path d="M6.6 11.7H10.3V15.5L6.6 15.1Z"/><path d="M10.9 11.7H15.8V16L10.9 15.5Z"/></g></svg>
<div class="tl" style="left:70px;top:848px;color:#DFE1E5">windows</div>
<svg class="ic" style="left:51px;top:875px" width="16" height="16" viewBox="0 0 16 16"><path d="M9.4 0.3H14.2L4.1 10.1L1.9 7.9Z" fill="#5EB2F6"/><path d="M9.4 7.2H14.2L10.7 11.6L14.2 16H9.4L5.2 11.5Z" fill="#5EB2F6"/><path d="M9.3 11.5L10.7 11.6L8.2 14.1L7.2 13.4Z" fill="#4A9AE0" opacity=".6"/></svg>
<div class="tl" style="left:70px;top:872px;color:#D49A5F">.flutter-plugins</div>
<svg class="ic" style="left:51px;top:899px" width="16" height="16" viewBox="0 0 16 16"><path d="M3.5 1.5H9.6L12.6 4.5V14.5H3.5Z" fill="#9CA1A7"/><path d="M9.6 1.5V4.5H12.6" fill="none" stroke="#2B2D30" stroke-width=".9"/></svg>
<div class="tl" style="left:70px;top:896px;color:#D49A5F">.flutter-plugins-dependencies</div>
<div class="vsb"></div>
<div class="hsb"></div>
<div style="position:absolute;left:0;top:0;width:1px;height:905px;background:#1E1F22"></div>
</div>
<div id="ed">
<div class="edline"></div>
<div class="tsb"></div>
<div class="ln" style="top:8px">1</div>
<div class="cl" style="top:8px"><span style="color:#CF8E6D">import</span> <span style="color:#6AAB73">&#x27;package:flutter/material.dart&#x27;</span><span style="color:#BCBEC4">;</span></div>
<div class="ln" style="top:32px">2</div>
<div class="cl" style="top:32px"></div>
<div class="ln" style="top:56px">3</div>
<div class="cl" style="top:56px"><span style="color:#CF8E6D">class</span> <span style="color:#BCBEC4">AppColors {</span></div>
<div class="ln" style="top:80px">4</div>
<div class="sw" style="top:84px;background:#757396"></div>
<div class="cl" style="top:80px">  <span style="color:#CF8E6D">static</span> <span style="color:#BCBEC4">Color</span> <span style="color:#C77DBB;font-style:italic">primary</span> <span style="color:#BCBEC4">=</span> <span style="color:#CF8E6D">const</span> <span style="color:#56A8F5">Color</span><span style="color:#BCBEC4">(</span><span style="color:#2AACB8">0xff757396</span><span style="color:#BCBEC4">);</span></div>
<div class="ln" style="top:104px">5</div>
<div class="sw" style="top:108px;background:#757396"></div>
<div class="cl" style="top:104px">  <span style="color:#CF8E6D">static</span> <span style="color:#BCBEC4">Color</span> <span style="color:#C77DBB;font-style:italic">onBoardingTxt</span> <span style="color:#BCBEC4">=</span> <span style="color:#CF8E6D">const</span> <span style="color:#56A8F5">Color</span><span style="color:#BCBEC4">(</span><span style="color:#2AACB8">0xff757396</span><span style="color:#BCBEC4">);</span></div>
<div class="ln" style="top:128px">6</div>
<div class="sw" style="top:132px;background:#75768A"></div>
<div class="cl" style="top:128px">  <span style="color:#CF8E6D">static</span> <span style="color:#BCBEC4">Color</span> <span style="color:#C77DBB;font-style:italic">appTextColor</span> <span style="color:#BCBEC4">=</span> <span style="color:#CF8E6D">const</span> <span style="color:#56A8F5">Color</span><span style="color:#BCBEC4">(</span><span style="color:#2AACB8">0xff75768A</span><span style="color:#BCBEC4">);</span></div>
<div class="ln" style="top:152px">7</div>
<div class="sw" style="top:156px;background:#D1CDE1"></div>
<div class="cl" style="top:152px">  <span style="color:#CF8E6D">static</span> <span style="color:#BCBEC4">Color</span> <span style="color:#C77DBB;font-style:italic">unSelected</span> <span style="color:#BCBEC4">=</span> <span style="color:#CF8E6D">const</span> <span style="color:#56A8F5">Color</span><span style="color:#BCBEC4">(</span><span style="color:#2AACB8">0xffD1CDE1</span><span style="color:#BCBEC4">);</span></div>
<div class="ln" style="top:176px">8</div>
<div class="sw" style="top:180px;background:#FCFAFF"></div>
<div class="cl" style="top:176px">  <span style="color:#CF8E6D">static</span> <span style="color:#BCBEC4">Color</span> <span style="color:#C77DBB;font-style:italic">lightPurple</span> <span style="color:#BCBEC4">=</span> <span style="color:#CF8E6D">const</span> <span style="color:#56A8F5">Color</span><span style="color:#BCBEC4">(</span><span style="color:#2AACB8">0xffFCFAFF</span><span style="color:#BCBEC4">);</span></div>
<div class="ln" style="top:200px">9</div>
<div class="sw" style="top:204px;background:#F3E7FF"></div>
<div class="cl" style="top:200px">  <span style="color:#CF8E6D">static</span> <span style="color:#BCBEC4">Color</span> <span style="color:#C77DBB;font-style:italic">lightPurple1</span> <span style="color:#BCBEC4">=</span> <span style="color:#CF8E6D">const</span> <span style="color:#56A8F5">Color</span><span style="color:#BCBEC4">(</span><span style="color:#2AACB8">0xffF3E7FF</span><span style="color:#BCBEC4">);</span></div>
<div class="ln" style="top:224px">10</div>
<div class="sw" style="top:228px;background:#F3E6FF"></div>
<div class="cl" style="top:224px">  <span style="color:#CF8E6D">static</span> <span style="color:#BCBEC4">Color</span> <span style="color:#C77DBB;font-style:italic">purple200</span> <span style="color:#BCBEC4">=</span> <span style="color:#CF8E6D">const</span> <span style="color:#56A8F5">Color</span><span style="color:#BCBEC4">(</span><span style="color:#2AACB8">0xffF3E6FF</span><span style="color:#BCBEC4">);</span></div>
<div class="ln" style="top:248px">11</div>
<div class="sw" style="top:252px;background:#FAFEFF"></div>
<div class="cl" style="top:248px">  <span style="color:#CF8E6D">static</span> <span style="color:#BCBEC4">Color</span> <span style="color:#C77DBB;font-style:italic">backGroundColor</span> <span style="color:#BCBEC4">=</span> <span style="color:#CF8E6D">const</span> <span style="color:#56A8F5">Color</span><span style="color:#BCBEC4">(</span><span style="color:#2AACB8">0xffFAFEFF</span><span style="color:#BCBEC4">);</span></div>
<div class="ln" style="top:272px">12</div>
<div class="sw" style="top:276px;background:#F6F8FF"></div>
<div class="cl" style="top:272px">  <span style="color:#CF8E6D">static</span> <span style="color:#BCBEC4">Color</span> <span style="color:#C77DBB;font-style:italic">profileOptionColor</span> <span style="color:#BCBEC4">=</span> <span style="color:#CF8E6D">const</span> <span style="color:#56A8F5">Color</span><span style="color:#BCBEC4">(</span><span style="color:#2AACB8">0xffF6F8FF</span><span style="color:#BCBEC4">);</span></div>
<div class="ln" style="top:296px">13</div>
<div class="sw" style="top:300px;background:#A9A9A9"></div>
<div class="cl" style="top:296px">  <span style="color:#CF8E6D">static</span> <span style="color:#BCBEC4">Color</span> <span style="color:#C77DBB;font-style:italic">grey</span> <span style="color:#BCBEC4">=</span> <span style="color:#CF8E6D">const</span> <span style="color:#56A8F5">Color</span><span style="color:#BCBEC4">(</span><span style="color:#2AACB8">0xffA9A9A9</span><span style="color:#BCBEC4">);</span></div>
<div class="ln" style="top:320px">14</div>
<div class="sw" style="top:324px;background:#4C4C4C"></div>
<div class="cl" style="top:320px">  <span style="color:#CF8E6D">static</span> <span style="color:#BCBEC4">Color</span> <span style="color:#C77DBB;font-style:italic">darkGrey</span> <span style="color:#BCBEC4">=</span> <span style="color:#CF8E6D">const</span> <span style="color:#56A8F5">Color</span><span style="color:#BCBEC4">(</span><span style="color:#2AACB8">0xff4C4C4C</span><span style="color:#BCBEC4">);</span></div>
<div class="ln" style="top:344px">15</div>
<div class="sw" style="top:348px;background:#616263"></div>
<div class="cl" style="top:344px">  <span style="color:#CF8E6D">static</span> <span style="color:#BCBEC4">Color</span> <span style="color:#C77DBB;font-style:italic">profileText</span> <span style="color:#BCBEC4">=</span> <span style="color:#CF8E6D">const</span> <span style="color:#56A8F5">Color</span><span style="color:#BCBEC4">(</span><span style="color:#2AACB8">0xff616263</span><span style="color:#BCBEC4">);</span></div>
<div class="ln" style="top:368px">16</div>
<div class="sw" style="top:372px;background:#999BAE"></div>
<div class="cl" style="top:368px">  <span style="color:#CF8E6D">static</span> <span style="color:#BCBEC4">Color</span> <span style="color:#C77DBB;font-style:italic">listenersDetail</span> <span style="color:#BCBEC4">=</span> <span style="color:#CF8E6D">const</span> <span style="color:#56A8F5">Color</span><span style="color:#BCBEC4">(</span><span style="color:#2AACB8">0xff999BAE</span><span style="color:#BCBEC4">);</span></div>
<div class="ln" style="top:392px">17</div>
<div class="sw" style="top:396px;background:#777687"></div>
<div class="cl" style="top:392px">  <span style="color:#CF8E6D">static</span> <span style="color:#BCBEC4">Color</span> <span style="color:#C77DBB;font-style:italic">otpScreenGrey</span> <span style="color:#BCBEC4">=</span> <span style="color:#CF8E6D">const</span> <span style="color:#56A8F5">Color</span><span style="color:#BCBEC4">(</span><span style="color:#2AACB8">0xff777687</span><span style="color:#BCBEC4">);</span></div>
<div class="ln" style="top:416px">18</div>
<div class="sw" style="top:420px;background:#84889F"></div>
<div class="cl" style="top:416px">  <span style="color:#CF8E6D">static</span> <span style="color:#BCBEC4">Color</span> <span style="color:#C77DBB;font-style:italic">profileLanguage</span> <span style="color:#BCBEC4">=</span> <span style="color:#CF8E6D">const</span> <span style="color:#56A8F5">Color</span><span style="color:#BCBEC4">(</span><span style="color:#2AACB8">0xff84889F</span><span style="color:#BCBEC4">);</span></div>
<div class="caret" style="top:439px"></div>
<div class="ln cur" style="top:440px">19</div>
<div class="sw" style="top:444px;background:#D4D8E1"></div>
<div class="cl" style="top:440px">  <span style="color:#CF8E6D">static</span> <span style="color:#BCBEC4">Color</span> <span style="color:#C77DBB;font-style:italic">indicatorColor</span> <span style="color:#BCBEC4">=</span> <span style="color:#CF8E6D">const</span> <span style="color:#56A8F5">Color</span><span style="color:#BCBEC4">(</span><span style="color:#2AACB8">0xffD4D8E1</span><span style="color:#BCBEC4">);</span></div>
<div class="ln" style="top:464px">20</div>
<div class="sw" style="top:468px;background:#EEF1F7"></div>
<div class="cl" style="top:464px">  <span style="color:#CF8E6D">static</span> <span style="color:#BCBEC4">Color</span> <span style="color:#C77DBB;font-style:italic">lightGrey</span> <span style="color:#BCBEC4">=</span> <span style="color:#CF8E6D">const</span> <span style="color:#56A8F5">Color</span><span style="color:#BCBEC4">(</span><span style="color:#2AACB8">0xffEEF1F7</span><span style="color:#BCBEC4">);</span></div>
<div class="ln" style="top:488px">21</div>
<div class="sw" style="top:492px;background:#EDEDEF"></div>
<div class="cl" style="top:488px">  <span style="color:#CF8E6D">static</span> <span style="color:#BCBEC4">Color</span> <span style="color:#C77DBB;font-style:italic">lightGrey1</span> <span style="color:#BCBEC4">=</span> <span style="color:#CF8E6D">const</span> <span style="color:#56A8F5">Color</span><span style="color:#BCBEC4">(</span><span style="color:#2AACB8">0xffEDEDEF</span><span style="color:#BCBEC4">);</span></div>
<div class="ln" style="top:512px">22</div>
<div class="sw" style="top:516px;background:#E5E5E5"></div>
<div class="cl" style="top:512px">  <span style="color:#CF8E6D">static</span> <span style="color:#BCBEC4">Color</span> <span style="color:#C77DBB;font-style:italic">lightGrey200</span> <span style="color:#BCBEC4">=</span> <span style="color:#CF8E6D">const</span> <span style="color:#56A8F5">Color</span><span style="color:#BCBEC4">(</span><span style="color:#2AACB8">0xffE5E5E5</span><span style="color:#BCBEC4">);</span></div>
<div class="ln" style="top:536px">23</div>
<div class="sw" style="top:540px;background:#A00EE7"></div>
<div class="cl" style="top:536px">  <span style="color:#CF8E6D">static</span> <span style="color:#BCBEC4">Color</span> <span style="color:#C77DBB;font-style:italic">purple</span> <span style="color:#BCBEC4">=</span> <span style="color:#CF8E6D">const</span> <span style="color:#56A8F5">Color</span><span style="color:#BCBEC4">(</span><span style="color:#2AACB8">0xffA00EE7</span><span style="color:#BCBEC4">);</span></div>
<div class="ln" style="top:560px">24</div>
<div class="sw" style="top:564px;background:#B109FF"></div>
<div class="cl" style="top:560px">  <span style="color:#CF8E6D">static</span> <span style="color:#BCBEC4">Color</span> <span style="color:#C77DBB;font-style:italic">purple400</span> <span style="color:#BCBEC4">=</span> <span style="color:#CF8E6D">const</span> <span style="color:#56A8F5">Color</span><span style="color:#BCBEC4">(</span><span style="color:#2AACB8">0xffB109FF</span><span style="color:#BCBEC4">);</span></div>
<div class="ln" style="top:584px">25</div>
<div class="sw" style="top:588px;background:#E2C2FF"></div>
<div class="cl" style="top:584px">  <span style="color:#CF8E6D">static</span> <span style="color:#BCBEC4">Color</span> <span style="color:#C77DBB;font-style:italic">purpleBorder</span> <span style="color:#BCBEC4">=</span> <span style="color:#CF8E6D">const</span> <span style="color:#56A8F5">Color</span><span style="color:#BCBEC4">(</span><span style="color:#2AACB8">0xffE2C2FF</span><span style="color:#BCBEC4">);</span></div>
<div class="ln" style="top:608px">26</div>
<div class="sw" style="top:612px;background:#E8CFFF"></div>
<div class="cl" style="top:608px">  <span style="color:#CF8E6D">static</span> <span style="color:#BCBEC4">Color</span> <span style="color:#C77DBB;font-style:italic">purple100</span> <span style="color:#BCBEC4">=</span> <span style="color:#CF8E6D">const</span> <span style="color:#56A8F5">Color</span><span style="color:#BCBEC4">(</span><span style="color:#2AACB8">0xffE8CFFF</span><span style="color:#BCBEC4">);</span></div>
<div class="ln" style="top:632px">27</div>
<div class="sw" style="top:636px;background:#EBEBF1"></div>
<div class="cl" style="top:632px">  <span style="color:#CF8E6D">static</span> <span style="color:#BCBEC4">Color</span> <span style="color:#C77DBB;font-style:italic">historyBorder</span> <span style="color:#BCBEC4">=</span> <span style="color:#CF8E6D">const</span> <span style="color:#56A8F5">Color</span><span style="color:#BCBEC4">(</span><span style="color:#2AACB8">0xffEBEBF1</span><span style="color:#BCBEC4">);</span></div>
<div class="ln" style="top:656px">28</div>
<div class="sw" style="top:660px;background:#111329"></div>
<div class="cl" style="top:656px">  <span style="color:#CF8E6D">static</span> <span style="color:#BCBEC4">Color</span> <span style="color:#C77DBB;font-style:italic">appColor</span> <span style="color:#BCBEC4">=</span> <span style="color:#CF8E6D">const</span> <span style="color:#56A8F5">Color</span><span style="color:#BCBEC4">(</span><span style="color:#2AACB8">0xff111329</span><span style="color:#BCBEC4">);</span></div>
<div class="ln" style="top:680px">29</div>
<div class="sw" style="top:684px;background:#1F1F1F"></div>
<div class="cl" style="top:680px">  <span style="color:#CF8E6D">static</span> <span style="color:#BCBEC4">Color</span> <span style="color:#C77DBB;font-style:italic">appDarkColor</span> <span style="color:#BCBEC4">=</span> <span style="color:#CF8E6D">const</span> <span style="color:#56A8F5">Color</span><span style="color:#BCBEC4">(</span><span style="color:#2AACB8">0xff1F1F1F</span><span style="color:#BCBEC4">);</span></div>
<div class="ln" style="top:704px">30</div>
<div class="sw" style="top:708px;background:#0BAF23"></div>
<div class="cl" style="top:704px">  <span style="color:#CF8E6D">static</span> <span style="color:#BCBEC4">Color</span> <span style="color:#C77DBB;font-style:italic">green</span> <span style="color:#BCBEC4">=</span> <span style="color:#CF8E6D">const</span> <span style="color:#56A8F5">Color</span><span style="color:#BCBEC4">(</span><span style="color:#2AACB8">0xff0BAF23</span><span style="color:#BCBEC4">);</span></div>
<div class="ln" style="top:728px">31</div>
<div class="sw" style="top:732px;background:#FFA100"></div>
<div class="cl" style="top:728px">  <span style="color:#CF8E6D">static</span> <span style="color:#BCBEC4">Color</span> <span style="color:#C77DBB;font-style:italic">orange</span> <span style="color:#BCBEC4">=</span> <span style="color:#CF8E6D">const</span> <span style="color:#56A8F5">Color</span><span style="color:#BCBEC4">(</span><span style="color:#2AACB8">0xffFFA100</span><span style="color:#BCBEC4">);</span></div>
<div class="ln" style="top:752px">32</div>
<div class="sw" style="top:756px;background:#FFFACF"></div>
<div class="cl" style="top:752px">  <span style="color:#CF8E6D">static</span> <span style="color:#BCBEC4">Color</span> <span style="color:#C77DBB;font-style:italic">lightYellow</span> <span style="color:#BCBEC4">=</span> <span style="color:#CF8E6D">const</span> <span style="color:#56A8F5">Color</span><span style="color:#BCBEC4">(</span><span style="color:#2AACB8">0xffFFFACF</span><span style="color:#BCBEC4">);</span></div>
<div class="ln" style="top:776px">33</div>
<div class="sw" style="top:780px;background:#F7F363"></div>
<div class="cl" style="top:776px">  <span style="color:#CF8E6D">static</span> <span style="color:#BCBEC4">Color</span> <span style="color:#C77DBB;font-style:italic">yellow</span> <span style="color:#BCBEC4">=</span> <span style="color:#CF8E6D">const</span> <span style="color:#56A8F5">Color</span><span style="color:#BCBEC4">(</span><span style="color:#2AACB8">0xffF7F363</span><span style="color:#BCBEC4">);</span></div>
<div class="ln" style="top:800px">34</div>
<div class="sw" style="top:804px;background:#FBF9B1"></div>
<div class="cl" style="top:800px">  <span style="color:#CF8E6D">static</span> <span style="color:#BCBEC4">Color</span> <span style="color:#C77DBB;font-style:italic">yellow200</span> <span style="color:#BCBEC4">=</span> <span style="color:#CF8E6D">const</span> <span style="color:#56A8F5">Color</span><span style="color:#BCBEC4">(</span><span style="color:#2AACB8">0xffFBF9B1</span><span style="color:#BCBEC4">);</span></div>
<div class="ln" style="top:824px">35</div>
<div class="sw" style="top:828px;background:#B8A750"></div>
<div class="cl" style="top:824px">  <span style="color:#CF8E6D">static</span> <span style="color:#BCBEC4">Color</span> <span style="color:#C77DBB;font-style:italic">yellowDark</span> <span style="color:#BCBEC4">=</span> <span style="color:#CF8E6D">const</span> <span style="color:#56A8F5">Color</span><span style="color:#BCBEC4">(</span><span style="color:#2AACB8">0xffB8A750</span><span style="color:#BCBEC4">);</span></div>
<div class="ln" style="top:848px">36</div>
<div class="sw" style="top:852px;background:#F9F1DC"></div>
<div class="cl" style="top:848px">  <span style="color:#CF8E6D">static</span> <span style="color:#BCBEC4">Color</span> <span style="color:#C77DBB;font-style:italic">lightYellow100</span> <span style="color:#BCBEC4">=</span> <span style="color:#CF8E6D">const</span> <span style="color:#56A8F5">Color</span><span style="color:#BCBEC4">(</span><span style="color:#2AACB8">0xffF9F1DC</span><span style="color:#BCBEC4">);</span></div>
<div class="ln" style="top:872px">37</div>
<div class="sw" style="top:876px;background:#FE6E0E"></div>
<div class="cl" style="top:872px">  <span style="color:#CF8E6D">static</span> <span style="color:#BCBEC4">Color</span> <span style="color:#C77DBB;font-style:italic">darkOrange</span> <span style="color:#BCBEC4">=</span> <span style="color:#CF8E6D">const</span> <span style="color:#56A8F5">Color</span><span style="color:#BCBEC4">(</span><span style="color:#2AACB8">0xffFE6E0E</span><span style="color:#BCBEC4">);</span></div>
<div class="ln" style="top:896px">38</div>
<div class="sw" style="top:900px;background:#F39C12"></div>
<div class="cl" style="top:896px">  <span style="color:#CF8E6D">static</span> <span style="color:#BCBEC4">Color</span> <span style="color:#C77DBB;font-style:italic">orange200</span> <span style="color:#BCBEC4">=</span> <span style="color:#CF8E6D">const</span> <span style="color:#56A8F5">Color</span><span style="color:#BCBEC4">(</span><span style="color:#2AACB8">0xffF39C12</span><span style="color:#BCBEC4">);</span></div>
<div class="gsep"></div>
<div class="rmargin"></div>
<svg style="position:absolute;left:1527px;top:12px" width="16" height="16" viewBox="0 0 16 16"><path d="M2.5 8.6L5.8 11.4L13 4.4" fill="none" stroke="#6FB24F" stroke-width="1.5"/></svg>
<div class="esb"></div>
<div class="mk" style="top:604px;height:5px;background:#549159"></div>
<div class="mk" style="top:696px;height:45px;background:#3D6BA5"></div>
</div>
<div class="rbox" style="left:15px;top:99px;width:116px;height:36px"></div>
<div class="rbox" style="left:35px;top:314px;width:135px;height:39px"></div>
<div class="rbox" style="left:49px;top:436px;width:181px;height:31px"></div>
</body></html>
